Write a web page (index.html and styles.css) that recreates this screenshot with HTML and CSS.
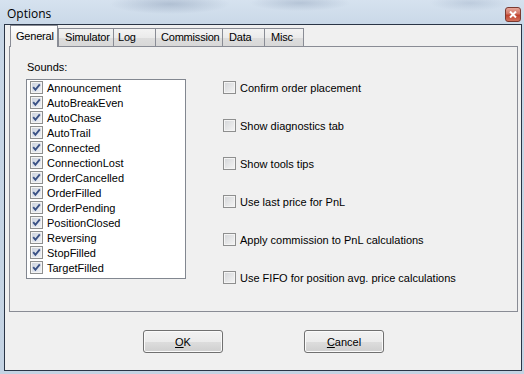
FILE: index.html
```html
<!DOCTYPE html>
<html lang="en">
  <head>
    <meta charset="UTF-8" />
    <title>Options</title>
    <link rel="stylesheet" href="styles.css">
  </head>
  <body>
    <div class="window">
      <div class="titlebar">
        <span class="title">Options</span>
        <span class="close-btn">
          <svg width="8" height="7" viewBox="0 0 8 7"><path d="M1 0.5 L7 6.5 M7 0.5 L1 6.5" stroke="#fff" stroke-width="2" /></svg>
        </span>
      </div>
      <div class="client">
        <div class="tabs">
          <div class="tab tab-active tab-general">General</div>
          <div class="tab tab-simulator">Simulator</div>
          <div class="tab tab-log">Log</div>
          <div class="tab tab-commission">Commission</div>
          <div class="tab tab-data">Data</div>
          <div class="tab tab-misc">Misc</div>
        </div>
        <div class="panel">
          <div class="sounds">
            <div class="sounds-label">Sounds:</div>
            <ul class="sound-list">
              <li><span class="check checked"><svg width="11" height="11" viewBox="0 0 11 11"><path d="M2.2 5.2 L4.4 7.8 L8.8 2.4" /></svg></span>Announcement</li>
              <li><span class="check checked"><svg width="11" height="11" viewBox="0 0 11 11"><path d="M2.2 5.2 L4.4 7.8 L8.8 2.4" /></svg></span>AutoBreakEven</li>
              <li><span class="check checked"><svg width="11" height="11" viewBox="0 0 11 11"><path d="M2.2 5.2 L4.4 7.8 L8.8 2.4" /></svg></span>AutoChase</li>
              <li><span class="check checked"><svg width="11" height="11" viewBox="0 0 11 11"><path d="M2.2 5.2 L4.4 7.8 L8.8 2.4" /></svg></span>AutoTrail</li>
              <li><span class="check checked"><svg width="11" height="11" viewBox="0 0 11 11"><path d="M2.2 5.2 L4.4 7.8 L8.8 2.4" /></svg></span>Connected</li>
              <li><span class="check checked"><svg width="11" height="11" viewBox="0 0 11 11"><path d="M2.2 5.2 L4.4 7.8 L8.8 2.4" /></svg></span>ConnectionLost</li>
              <li><span class="check checked"><svg width="11" height="11" viewBox="0 0 11 11"><path d="M2.2 5.2 L4.4 7.8 L8.8 2.4" /></svg></span>OrderCancelled</li>
              <li><span class="check checked"><svg width="11" height="11" viewBox="0 0 11 11"><path d="M2.2 5.2 L4.4 7.8 L8.8 2.4" /></svg></span>OrderFilled</li>
              <li><span class="check checked"><svg width="11" height="11" viewBox="0 0 11 11"><path d="M2.2 5.2 L4.4 7.8 L8.8 2.4" /></svg></span>OrderPending</li>
              <li><span class="check checked"><svg width="11" height="11" viewBox="0 0 11 11"><path d="M2.2 5.2 L4.4 7.8 L8.8 2.4" /></svg></span>PositionClosed</li>
              <li><span class="check checked"><svg width="11" height="11" viewBox="0 0 11 11"><path d="M2.2 5.2 L4.4 7.8 L8.8 2.4" /></svg></span>Reversing</li>
              <li><span class="check checked"><svg width="11" height="11" viewBox="0 0 11 11"><path d="M2.2 5.2 L4.4 7.8 L8.8 2.4" /></svg></span>StopFilled</li>
              <li><span class="check checked"><svg width="11" height="11" viewBox="0 0 11 11"><path d="M2.2 5.2 L4.4 7.8 L8.8 2.4" /></svg></span>TargetFilled</li>
            </ul>
          </div>
          <div class="options">
            <div class="option"><span class="check"></span>Confirm order placement</div>
            <div class="option"><span class="check"></span>Show diagnostics tab</div>
            <div class="option"><span class="check"></span>Show tools tips</div>
            <div class="option"><span class="check"></span>Use last price for PnL</div>
            <div class="option"><span class="check"></span>Apply commission to PnL calculations</div>
            <div class="option"><span class="check"></span>Use FIFO for position avg. price calculations</div>
          </div>
        </div>
        <div class="buttons">
          <button class="btn"><u>O</u>K</button>
          <button class="btn"><u>C</u>ancel</button>
        </div>
      </div>
    </div>
  </body>
</html>
```

FILE: styles.css
```css
* {
  box-sizing: border-box;
}
body {
  margin: 0;
  background-color: #c4d3e3;
  font-family: "Liberation Sans", Arial, sans-serif;
  font-size: 11px;
  color: #000;
}
.window {
  width: 524px;
  height: 374px;
  display: flex;
  flex-direction: column;
  background:
    radial-gradient(ellipse 60px 10px at 170px 4px, rgba(110, 130, 160, 0.35), transparent),
    radial-gradient(ellipse 50px 8px at 300px 3px, rgba(110, 130, 160, 0.3), transparent),
    radial-gradient(ellipse 40px 8px at 470px 3px, rgba(120, 140, 170, 0.25), transparent),
    linear-gradient(#d6e2ef, #c7d6e6 30px, #c4d3e3);
}
.titlebar {
  height: 24px;
  display: flex;
  justify-content: space-between;
  padding: 0 3px 0 7px;
}
.title {
  font-family: "Open Sans", "Liberation Sans", sans-serif;
  font-size: 12px;
  line-height: 16px;
  padding-top: 6px;
}
.close-btn {
  width: 16px;
  height: 15px;
  margin-top: 7px;
  display: flex;
  align-items: center;
  justify-content: center;
  border: 1px solid #7a3a31;
  border-radius: 3px;
  background: linear-gradient(#e6a699, #d27463 45%, #c0412c 55%, #d2725d);
}
.client {
  flex: 1;
  margin: 0 2px 3px 4px;
  border: 1px solid #2a3546;
  background-color: #f0f0f0;
  padding: 0 3px 0 4px;
  display: flex;
  flex-direction: column;
}
.tabs {
  display: flex;
  align-items: flex-end;
  height: 21px;
  padding-left: 1px;
}
.tab {
  height: 18px;
  line-height: 17px;
  padding-left: 6px;
  border: 1px solid #898c95;
  border-bottom: none;
  border-right: none;
  background: linear-gradient(#f3f3f3, #ebebeb 50%, #dddddd 51%, #d8d8d8);
  white-space: nowrap;
  overflow: hidden;
  letter-spacing: -0.2px;
}
.tab-active {
  height: 22px;
  line-height: 20px;
  margin-bottom: -1px;
  border-right: 1px solid #898c95;
  background: linear-gradient(#ffffff, #f0f0f0 60%);
  position: relative;
  z-index: 1;
  padding-left: 5px;
}
.tab-general { width: 48px; }
.tab-simulator { width: 55px; }
.tab-log { width: 42px; padding-left: 4px; }
.tab-commission { width: 67px; padding-left: 5px; }
.tab-data { width: 42px; }
.tab-misc { width: 40px; border-right: 1px solid #898c95; }
.panel {
  height: 266px;
  border: 1px solid #898c95;
  background-color: #f0f0f0;
  display: flex;
}
.sounds {
  padding: 14px 0 0 16px;
}
.sounds-label {
  line-height: 13px;
  margin-bottom: 5px;
  padding-left: 1px;
}
.sound-list {
  width: 160px;
  margin: 0;
  padding: 0 0 3px;
  list-style: none;
  background-color: #fff;
  border: 1px solid #828790;
}
.sound-list li {
  height: 15px;
  display: flex;
  align-items: center;
  padding-left: 3px;
}
.check {
  width: 13px;
  height: 13px;
  flex: none;
  margin-right: 4px;
  border: 1px solid #8e8f8f;
  background: linear-gradient(135deg, #d3d5d8, #f5f5f5);
  box-shadow: inset 0 0 0 1px #f4f4f4;
  display: flex;
  align-items: center;
  justify-content: center;
}
.check.checked {
  background: linear-gradient(135deg, #c9d0dc, #f2f4f8);
}
.check svg path {
  fill: none;
  stroke: #3a5185;
  stroke-width: 1.9;
}
.options {
  margin-left: 37px;
  padding-top: 33px;
}
.option {
  height: 15px;
  display: flex;
  align-items: center;
  margin-bottom: 23px;
  white-space: nowrap;
}
.buttons {
  display: flex;
  justify-content: center;
  gap: 81px;
  padding-top: 18px;
}
.btn {
  width: 80px;
  height: 23px;
  padding: 0;
  font-family: "Liberation Sans", Arial, sans-serif;
  font-size: 11px;
  color: #000;
  border: 1px solid #707070;
  border-radius: 3px;
  background: linear-gradient(#f2f2f2, #ebebeb 50%, #dddddd 51%, #cfcfcf);
  box-shadow: inset 0 0 0 1px #fafafa;
}
```
